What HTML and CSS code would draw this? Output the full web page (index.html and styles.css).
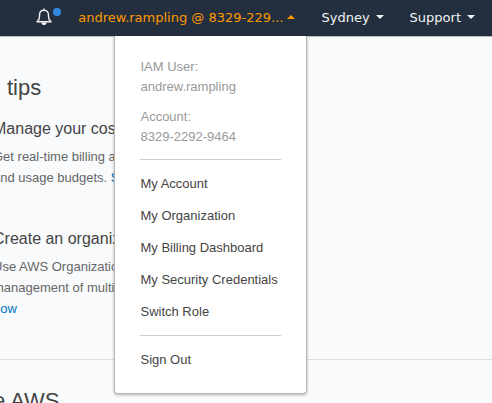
FILE: index.html
```html
<!DOCTYPE html>
<html lang="en">
<head>
<meta charset="utf-8">
<title>AWS</title>
<link rel="stylesheet" href="styles.css">
</head>
<body>
<header class="topbar">
  <button class="bell" type="button" aria-label="Notifications">
    <svg class="bell-icon" width="16" height="18" viewBox="0 0 16 18" aria-hidden="true">
      <path d="M8 .5v1.500M1 13.800C2.800 12.500 3.500 11 3.500 8.500V7C3.500 4 5.300 2.200 8 2.200S12.500 4 12.500 7v1.500c0 2.500.7 4 2.500 5.300z" fill="none" stroke="#f2f3f4" stroke-width="1.400" stroke-linejoin="round"/>
      <path d="M5.500 14.500h5a2.500 2.500 0 0 1-5 0z" fill="#fff"/>
    </svg>
    <span class="dot"></span>
  </button>
  <nav class="nav">
    <div class="account">
      <button class="nav-item nav-item-open" type="button" aria-expanded="true">andrew.rampling @ 8329-229...<svg class="caret caret-up" width="8" height="4" viewBox="0 0 8 4" aria-hidden="true"><path d="M0 4 4 0l4 4z" fill="currentColor"/></svg></button>
      <div class="menu">
        <dl class="identity">
          <dt>IAM User:</dt>
          <dd>andrew.rampling</dd>
          <dt>Account:</dt>
          <dd>8329-2292-9464</dd>
        </dl>
        <ul class="links">
          <li><a href="#">My Account</a></li>
          <li><a href="#">My Organization</a></li>
          <li><a href="#">My Billing Dashboard</a></li>
          <li><a href="#">My Security Credentials</a></li>
          <li><a href="#">Switch Role</a></li>
        </ul>
        <ul class="links">
          <li><a href="#">Sign Out</a></li>
        </ul>
      </div>
    </div>
    <button class="nav-item" type="button">Sydney<svg class="caret" width="8" height="4" viewBox="0 0 8 4" aria-hidden="true"><path d="M0 0h8L4 4z" fill="currentColor"/></svg></button>
    <button class="nav-item" type="button">Support<svg class="caret" width="8" height="4" viewBox="0 0 8 4" aria-hidden="true"><path d="M0 0h8L4 4z" fill="currentColor"/></svg></button>
  </nav>
</header>
<main class="page">
  <section class="tips">
    <h2 class="tips-title">tips</h2>
    <article class="tip">
      <h3>Manage your cos</h3>
      <p>Get real-time billing a<br>and usage budgets. <a href="#">S</a></p>
    </article>
    <article class="tip">
      <h3>Create an organiz</h3>
      <p>Use AWS Organizatio<br>management of multi<br><a href="#">now</a></p>
    </article>
  </section>
  <section class="explore">
    <h2>e AWS</h2>
  </section>
</main>
</body>
</html>
```
FILE: styles.css
```css
* {
  box-sizing: border-box;
}

body {
  margin: 0;
  min-height: 100vh;
  overflow: hidden;
  background: #f9fafc;
  color: #444;
  font-family: "Liberation Sans", Arial, sans-serif;
  font-size: 13px;
}

h2, h3, p, ul, dl, dd {
  margin: 0;
  padding: 0;
  font-weight: normal;
}

button {
  padding: 0;
  border: 0;
  background: none;
}

.topbar {
  display: flex;
  align-items: center;
  justify-content: flex-end;
  height: 37px;
  padding: 0 17px 0 0;
  border-bottom: 1px solid #b8babd;
  background: #232f3e;
}

.bell {
  position: relative;
  display: flex;
  margin: 0 26px 2px 0;
}

.dot {
  position: absolute;
  top: 0;
  left: 17px;
  width: 8px;
  height: 8px;
  border-radius: 50%;
  background: #348ae2;
}

.nav {
  display: flex;
  gap: 26px;
}

.account {
  position: relative;
}

.nav-item {
  display: flex;
  align-items: center;
  color: #f2f3f4;
  font-family: "DejaVu Sans", Verdana, sans-serif;
  font-size: 13px;
  line-height: 20px;
  white-space: nowrap;
}

.nav-item-open {
  color: #ff9900;
}

.caret {
  margin: 0 0 2px 6px;
}

.caret-up {
  margin-left: 4px;
}

.menu {
  position: absolute;
  top: 28px;
  right: -12px;
  width: 193px;
  padding: 21px 25px 10px;
  border: 1px solid #b4b6b8;
  border-top: 0;
  border-radius: 0 0 4px 4px;
  background: #fff;
  box-shadow: 0 1px 3px rgba(0, 0, 0, 0.3);
}

.identity {
  color: #999;
  line-height: 20px;
}

.identity dd {
  margin-bottom: 10px;
}

.links {
  padding: 8px 0 7px;
  margin-top: 12px;
  border-top: 1px solid #ccc;
  list-style: none;
}

.links + .links {
  margin-top: 0;
}

.links a {
  display: block;
  color: #444;
  line-height: 32px;
  text-decoration: none;
  white-space: nowrap;
}

.page {
  margin-left: -7px;
}

.tips {
  padding-top: 36px;
  border-bottom: 1px solid #ddd;
}

h2 {
  font-size: 22px;
  line-height: 30px;
}

.tips-title {
  padding-left: 14px;
}

.tip {
  height: 110px;
  padding-top: 16px;
}

.tip + .tip {
  height: 146px;
}

.tip h3 {
  font-size: 16px;
  line-height: 20px;
}

.tip p {
  padding-top: 7px;
  color: #666;
  line-height: 21px;
}

.tip a {
  color: #0073bb;
  text-decoration: none;
}

.explore {
  padding-top: 26px;
}
```
